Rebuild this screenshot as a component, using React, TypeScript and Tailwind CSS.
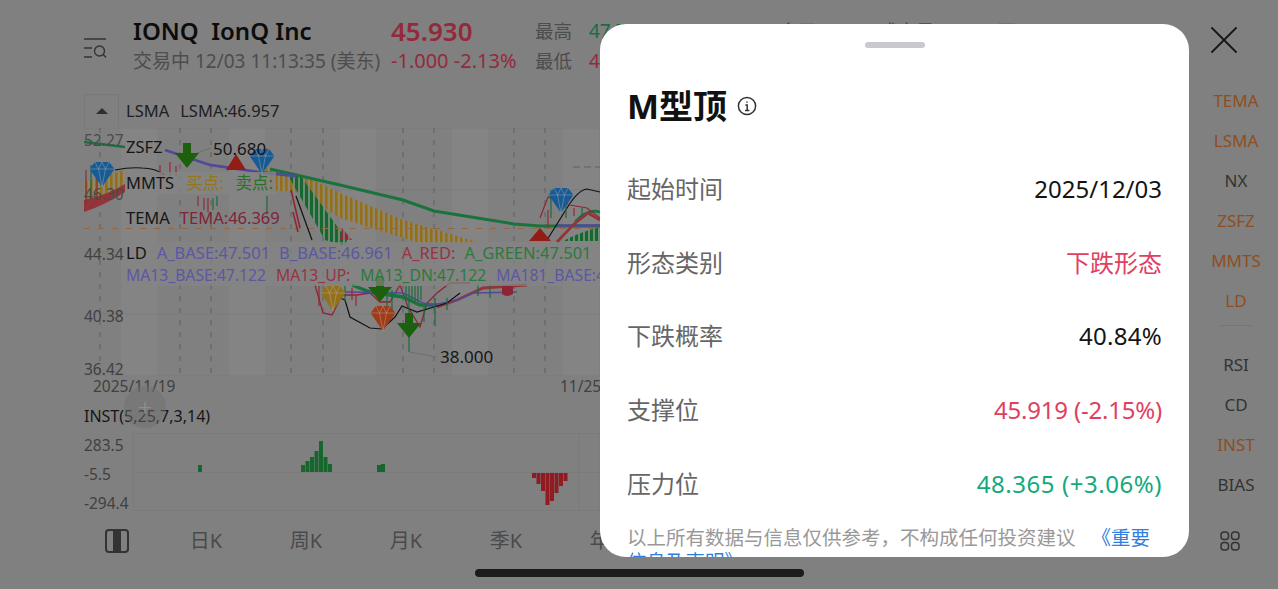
import React from "react";
import { X } from "lucide-react";

const railTop = [
  { label: "TEMA", on: true },
  { label: "LSMA", on: true },
  { label: "NX", on: false },
  { label: "ZSFZ", on: true },
  { label: "MMTS", on: true },
  { label: "LD", on: true },
];
const railBottom = [
  { label: "RSI", on: false },
  { label: "CD", on: false },
  { label: "INST", on: true },
  { label: "BIAS", on: false },
];

const rows = [
  { label: "起始时间", value: "2025/12/03", color: "text-[#141414]" },
  { label: "形态类别", value: "下跌形态", color: "text-[#e0405f]" },
  { label: "下跌概率", value: "40.84%", color: "text-[#141414] tracking-[0.3px]" },
  { label: "支撑位", value: "45.919 (-2.15%)", color: "text-[#e0405f] tracking-[-0.2px]" },
  { label: "压力位", value: "48.365 (+3.06%)", color: "text-[#12a97c] tracking-[0.55px]" },
];

const stripes = [121, 229, 340, 452, 563];
const dashes = [100, 180, 211, 291, 323, 403, 434, 514, 545];

const greenBars = [
  [198, 7],
  [301, 7],
  [305.5, 11],
  [310, 15],
  [314.5, 21],
  [319, 31],
  [323.5, 15],
  [328, 8],
  [377, 7],
  [381, 8],
];
const redBars = [
  [532, 5],
  [536.5, 11],
  [541, 18],
  [545.5, 32],
  [550, 28],
  [554.5, 20],
  [559, 13],
  [563.5, 8],
];

// little candle wicks scattered around the chart: x, y1, y2, colour
const wicks: [number, number, number, string][] = [
  [86, 170, 205, "#8f2a35"],
  [91, 165, 200, "#1d6b3c"],
  [97, 175, 200, "#8f2a35"],
  [160, 165, 176, "#8f2a35"],
  [170, 162, 176, "#8f2a35"],
  [176, 166, 176, "#8f2a35"],
  [208, 198, 212, "#8f2a35"],
  [198, 196, 206, "#8f2a35"],
  [204, 198, 210, "#8f2a35"],
  [213, 198, 210, "#1d6b3c"],
  [217, 196, 206, "#1d6b3c"],
  [267, 196, 214, "#1d6b3c"],
  [319, 286, 306, "#8f2a35"],
  [345, 286, 302, "#1d6b3c"],
  [352, 288, 300, "#8f2a35"],
  [356, 296, 306, "#8f2a35"],
  [387, 296, 316, "#1d6b3c"],
  [392, 290, 310, "#1d6b3c"],
  [406, 286, 300, "#1d6b3c"],
  [409, 286, 352, "#1d6b3c"],
  [412, 286, 302, "#1d6b3c"],
  [415, 286, 302, "#1d6b3c"],
  [418, 286, 302, "#1d6b3c"],
  [421, 286, 300, "#1d6b3c"],
  [424, 306, 322, "#1d6b3c"],
  [435, 298, 326, "#1d6b3c"],
  [447, 298, 310, "#1d6b3c"],
  [478, 284, 296, "#1d6b3c"],
  [490, 284, 298, "#1d6b3c"],
  [551, 190, 218, "#1d6b3c"],
  [548, 210, 228, "#8f2a35"],
  [566, 205, 218, "#1d6b3c"],
  [574, 208, 216, "#8f2a35"],
  [582, 208, 216, "#1d6b3c"],
];

const Diamond = ({ x, y, fill }: { x: number; y: number; fill: string }) => (
  <g transform={`translate(${x} ${y})`}>
    <path d="M-12.5 -5 L-7 -12 L7 -12 L12.5 -5 L0 13 Z" fill={fill} />
    <path
      d="M-12.5 -5 H12.5 M-7 -12 L-3.5 -5 L0 -12 L3.5 -5 L7 -12 M-3.5 -5 L0 13 L3.5 -5"
      fill="none"
      stroke="#b5b5b5"
      strokeWidth="0.7"
      opacity="0.6"
    />
  </g>
);

const DownArrow = ({ x, y }: { x: number; y: number }) => (
  <path
    d={`M${x - 4} ${y - 15} h8 v10 h8 L${x} ${y + 10} L${x - 12} ${y - 5} h8 Z`}
    fill="#1c600e"
  />
);

const PriceChart = () => (
  <svg viewBox="84 128 516 248" className="block h-full w-full">
    <defs>
      <pattern id="gold" width="5" height="6" patternUnits="userSpaceOnUse">
        <rect width="5" height="6" fill="#8c8672" />
        <rect width="2.6" height="6" fill="#946f16" />
      </pattern>
      <pattern id="greenHatch" width="5" height="6" patternUnits="userSpaceOnUse">
        <rect width="5" height="6" fill="#6d8a72" />
        <rect width="3" height="6" fill="#176830" />
      </pattern>
      <pattern id="redHatch" width="5" height="6" patternUnits="userSpaceOnUse">
        <rect width="5" height="6" fill="#8f6a6d" />
        <rect width="3" height="6" fill="#8e2c36" />
      </pattern>
    </defs>

    {stripes.map((x) => (
      <rect key={x} x={x} y="128" width="36" height="248" fill="#848484" />
    ))}
    {[128, 190, 252, 314, 376].map((y) => (
      <line key={y} x1="84" x2="600" y1={y} y2={y} stroke="#7a7a7a" strokeWidth="0.7" />
    ))}
    {dashes.map((x) => (
      <line
        key={x}
        x1={x}
        x2={x}
        y1="128"
        y2="376"
        stroke="#5e5e5e"
        strokeWidth="1"
        strokeDasharray="5 7"
      />
    ))}

    {/* ribbons */}
    <path d="M84 182 L125 170 L125 188 L84 206 Z" fill="url(#gold)" />
    <path d="M84 200 Q110 194 125 184 L125 192 Q105 205 84 212 Z" fill="#933438" />
    <path d="M266 168 L300 174 L340 193 L403 220 L430 228 L480 243 L420 243 L403 238 L340 218 L300 192 L266 190 Z" fill="url(#gold)" />
    <path d="M286 172 L300 175 L347 240 L345 246 L325 240 Z" fill="url(#greenHatch)" />
    <path d="M342 228 L352 240 L340 240 Z" fill="url(#redHatch)" />
    <path d="M563 241 Q580 232 600 227 L600 241 Z" fill="url(#greenHatch)" />

    {/* dashed level lines */}
    <line x1="84" x2="600" y1="228.5" y2="228.5" stroke="#96653e" strokeWidth="1.2" strokeDasharray="6 8" />
    <line x1="573" x2="600" y1="167" y2="167" stroke="#5e5e5e" strokeWidth="1" strokeDasharray="7 4" />

    {/* moving averages */}
    <path d="M84 142 L125 147" fill="none" stroke="#1c7040" strokeWidth="2.6" />
    <path d="M270 169 L340 185 L403 200 L434 211 L514 224 L540 226 L600 226" fill="none" stroke="#1a723c" strokeWidth="3" />
    <path d="M165 150 L210 165 L258 172 L296 176" fill="none" stroke="#524a98" strokeWidth="2.8" />
    <path d="M557 225.5 H600" fill="none" stroke="#524a98" strokeWidth="2.6" />
    <path d="M575 222 Q588 208 600 212" fill="none" stroke="#1a723c" strokeWidth="2.6" />
    <path d="M557 242 L573 225 L588 213 L600 220" fill="none" stroke="#933438" strokeWidth="2.8" />
    <path d="M115 170 Q130 167 142 168 Q155 168 165 175" fill="none" stroke="#111" strokeWidth="1.2" />
    <path d="M296 196 L312 240" fill="none" stroke="#111" strokeWidth="1.2" />
    <path d="M547 240 L567 208 Q578 190 587 189 L600 192" fill="none" stroke="#111" strokeWidth="1.2" />

    {/* red price line */}
    <path d="M291 190 L300 228 M293 212 L298 232" fill="none" stroke="#8e2535" strokeWidth="1.6" />
    <path d="M540 218 L548 197 L570 205 L587 208 L600 218" fill="none" stroke="#8e2535" strokeWidth="1.2" />
    <path d="M315 285 L323 313 L332 315 L342 295 H357 L370 293 L380 302 H390 L400 285 L408 307 L420 327 L427 303 L437 293 L450 283 H470" fill="none" stroke="#8e2535" strokeWidth="1.3" />
    <path d="M437 307 L457 300 L483 288 L527 285" fill="none" stroke="#933438" strokeWidth="2.8" />
    <path d="M352 285 L370 292 L403 297 L420 305 H437" fill="none" stroke="#1a723c" strokeWidth="3.4" />
    <path d="M345 292 L403 293 L423 303 L433 305 L457 300 L473 293 L517 292" fill="none" stroke="#524a98" strokeWidth="1.5" />
    <path d="M340 298 L345 300 L350 317 L370 328 L382 329 L395 317 L402 306 L417 312 L447 303 L460 293" fill="none" stroke="#111" strokeWidth="1.2" />

    {wicks.map(([x, y1, y2, c], i) => (
      <line key={i} x1={x} x2={x} y1={y1} y2={y2} stroke={c} strokeWidth="1.2" />
    ))}

    {/* pointer lines */}
    <path d="M194 154 L211 148" fill="none" stroke="#6f6f6f" strokeWidth="1" />
    <path d="M410 352 L437 357" fill="none" stroke="#6f6f6f" strokeWidth="1" />

    {/* signal marks */}
    <DownArrow x={187} y={158} />
    <DownArrow x={380} y={292} />
    <DownArrow x={409} y={328} />
    <path d="M226 170 L236 154 L246 170 Z" fill="#931c14" />
    <path d="M529 241 L540 228 L551 241 Z" fill="#931c14" />
    <path d="M502 286 H513 V294 Q507 298 502 294 Z" fill="#8e2535" />
    <Diamond x={102} y={174} fill="#175a94" />
    <Diamond x={262} y={161} fill="#175a94" />
    <Diamond x={561} y={200} fill="#175a94" />
    <Diamond x={333} y={298} fill="#94701a" />
    <Diamond x={383} y={318} fill="#a03b17" />
  </svg>
);

const Chart = () => (
  <div className="relative h-[248px] w-[516px] text-[16.5px] leading-[22px]">
    <PriceChart />

    <span className="absolute left-0 top-[1px] text-[15.5px] text-[#4a4a4a]">52.27</span>
    <span className="absolute left-0 top-[55px] text-[15.5px] text-[#4a4a4a]">46.30</span>
    <span className="absolute left-0 top-[115px] text-[15.5px] text-[#404040]">44.34</span>
    <span className="absolute left-0 top-[177px] text-[15.5px] text-[#404040]">40.38</span>
    <span className="absolute left-0 top-[230px] text-[15.5px] text-[#404040]">36.42</span>
    <span className="absolute left-[129px] top-[10px] text-[17px] text-[#161616]">50.680</span>
    <span className="absolute left-[356px] top-[218px] text-[17px] text-[#161616]">38.000</span>

    <div className="absolute left-[42px] top-[8px] text-[#161616]">ZSFZ</div>
    <div className="absolute left-[42px] top-[44px] flex w-[150px] gap-[12px] whitespace-nowrap bg-[#858585]/80 text-[#161616]">
      <span>MMTS</span>
      <span className="text-[#94761a]">买点:</span>
      <span className="text-[#2a7028]">卖点:</span>
    </div>
    <div className="absolute left-[42px] top-[79px] flex gap-[10px]">
      <span className="text-[#161616]">TEMA</span>
      <span className="text-[#7e2438]">TEMA:46.369</span>
    </div>
    <div className="absolute left-[42px] top-[114px] flex w-[474px] gap-[9px] whitespace-nowrap bg-[#858585]/70">
      <span className="mr-[1px] text-[#161616]">LD</span>
      <span className="text-[#5b57a3]">A_BASE:47.501</span>
      <span className="text-[#5b57a3]">B_BASE:46.961</span>
      <span className="text-[#983344]">A_RED:</span>
      <span className="text-[#2b7a3c]">A_GREEN:47.501</span>
    </div>
    <div className="absolute left-[42px] top-[136px] flex w-[474px] gap-[10px] overflow-hidden whitespace-nowrap bg-[#858585]/70 text-[15.7px]">
      <span className="text-[#5b57a3]">MA13_BASE:47.122</span>
      <span className="text-[#983344]">MA13_UP:</span>
      <span className="text-[#2b7a3c]">MA13_DN:47.122</span>
      <span className="text-[#5b57a3]">MA181_BASE:47.122</span>
    </div>
  </div>
);

const IndicatorChart = () => (
  <div className="relative h-[78px] w-[516px]">
    <svg viewBox="84 433 516 78" className="block h-full w-full">
      <rect x="133" y="433.5" width="467" height="77" fill="none" stroke="#7a7a7a" strokeWidth="0.7" />
      <line x1="133" x2="600" y1="472.5" y2="472.5" stroke="#787878" strokeWidth="0.7" />
      <line x1="579" x2="579" y1="433" y2="511" stroke="#7a7a7a" strokeWidth="0.7" />
      {greenBars.map(([x, h]) => (
        <rect key={x} x={x} y={472 - h} width="4" height={h} fill="#17662e" />
      ))}
      {redBars.map(([x, h]) => (
        <rect key={x} x={x} y="473" width="4" height={h} fill="#8e1c22" />
      ))}
    </svg>
    <span className="absolute left-0 top-[1px] text-[15.5px] leading-[22px] text-[#404040]">283.5</span>
    <span className="absolute left-0 top-[30px] text-[15.5px] leading-[22px] text-[#404040]">-5.5</span>
    <span className="absolute left-0 top-[59px] text-[15.5px] leading-[22px] text-[#404040]">-294.4</span>
  </div>
);

const App = () => {
  return (
    <div className="relative flex h-[589px] w-[1278px] overflow-hidden bg-[#808080] font-['Noto_Sans','Noto_Sans_CJK_SC',sans-serif]">
      <main className="flex h-full w-[1190px] flex-col pl-[84px]">
        <header className="flex h-[92px] shrink-0 pt-[16px] whitespace-nowrap">
          <svg viewBox="0 0 24 22" className="mt-[21px] h-[22px] w-[24px] shrink-0" fill="none" stroke="#333" strokeWidth="1.4">
            <path d="M0 2 H22 M0 11 H8 M0 20 H8" />
            <circle cx="15.5" cy="14" r="5" />
            <path d="M19.2 17.6 L22 20.4" />
          </svg>
          <div className="ml-[25px] w-[258px]">
            <div className="h-[30px] text-[24px] font-semibold leading-[30px] text-[#0c0c0c]">
              IONQ&nbsp; IonQ Inc
            </div>
            <div className="text-[19px] leading-[30px] text-[#4d4d4d]">交易中 12/03 11:13:35 (美东)</div>
          </div>
          <div className="w-[144px]">
            <div className="h-[30px] text-[26px] font-semibold leading-[30px] text-[#932a3c]">45.930</div>
            <div className="text-[20px] leading-[30px] text-[#932a3c]">-1.000 -2.13%</div>
          </div>
          <div className="w-[54px] text-[18.5px] leading-[30px] text-[#4d4d4d]">
            <div>最高</div>
            <div>最低</div>
          </div>
          <div className="w-[190px] text-[19px] leading-[30px]">
            <div className="text-[#1c6b45]">47.780</div>
            <div className="text-[#932a3c]">45.620</div>
          </div>
          <div className="w-[100px] text-[18.5px] leading-[30px] text-[#4d4d4d]">今开</div>
          <div className="text-[18.5px] leading-[30px] text-[#4d4d4d]">成交量 1234.5万</div>
        </header>

        <div className="flex h-[36px] shrink-0 items-center">
          <div className="flex h-[33px] w-[35px] items-center justify-center rounded-t-[3px] border border-b-0 border-[#787878]">
            <div className="h-0 w-0 border-x-[6px] border-b-[6px] border-x-transparent border-b-[#2e2e2e]" />
          </div>
          <div className="ml-[7px] flex gap-[11px] pt-[2px] text-[16.5px] text-[#202020]">
            <span>LSMA</span>
            <span>LSMA:46.957</span>
          </div>
        </div>

        <Chart />

        <div className="relative h-[22px] w-[516px] shrink-0 text-[15.5px] leading-[20px] text-[#404040]">
          <span className="absolute left-[9px] top-0">2025/11/19</span>
          <span className="absolute left-[476px] top-0">11/25</span>
        </div>

        <div className="h-[35px] shrink-0 pt-[6px] text-[16px] leading-[24px] text-[#161616]">INST(5,25,7,3,14)</div>

        <IndicatorChart />

        <nav className="flex h-[60px] shrink-0 items-center text-[20px] text-[#4a4a4a]">
          <svg viewBox="0 0 24 24" className="ml-[21px] h-[24px] w-[24px]">
            <rect x="1" y="1" width="22" height="22" rx="3" fill="none" stroke="#333" strokeWidth="2" />
            <rect x="8" y="1" width="8" height="22" fill="#333" />
          </svg>
          <div className="ml-[27px] flex">
            <span className="w-[100px] text-center">日K</span>
            <span className="w-[100px] text-center">周K</span>
            <span className="w-[100px] text-center">月K</span>
            <span className="w-[100px] text-center">季K</span>
            <span className="w-[100px] text-center">年K</span>
          </div>
        </nav>
      </main>

      <aside className="flex w-[88px] flex-col items-center pl-[4px] text-[17px]">
        <div className="flex h-[81px] w-full shrink-0 items-start justify-center pr-[24px] pt-[16px]">
          <X className="h-[48px] w-[48px] shrink-0 text-[#161616]" strokeWidth={0.9} />
        </div>
        {railTop.map((item) => (
          <div key={item.label} className={`flex h-[40px] shrink-0 items-center ${item.on ? "text-[#8e4e22]" : "text-[#333333]"}`}>
            {item.label}
          </div>
        ))}
        <div className="my-[4px] h-px w-[34px] shrink-0 bg-[#767676]" />
        <div className="h-[15px] shrink-0" />
        {railBottom.map((item) => (
          <div key={item.label} className={`flex h-[40px] shrink-0 items-center ${item.on ? "text-[#8e4e22]" : "text-[#333333]"}`}>
            {item.label}
          </div>
        ))}
        <svg viewBox="0 0 20 20" className="mr-[12px] mt-[26px] h-[20px] w-[20px]" fill="none" stroke="#333" strokeWidth="1.5">
          <rect x="1" y="1" width="7.5" height="7.5" rx="3" />
          <rect x="11.5" y="1" width="7.5" height="7.5" rx="3" />
          <rect x="1" y="11.5" width="7.5" height="7.5" rx="3" />
          <rect x="11.5" y="11.5" width="7.5" height="7.5" rx="3" />
        </svg>
      </aside>

      {/* drag button sitting over the chart */}
      <div className="absolute left-[124px] top-[386px] flex h-[42px] w-[42px] items-center justify-center rounded-full bg-[#707070]/50 text-[26px] font-light leading-none text-[#8e8e8e]">
        +
      </div>

      {/* bottom sheet */}
      <section className="absolute left-[600px] top-[24px] h-[533px] w-[589px] overflow-hidden rounded-[26px] bg-white px-[27px]">
        <div className="mx-auto mt-[18px] h-[6px] w-[60px] rounded-full bg-[#c9cacd]" />
        <div className="mt-[36px] flex h-[44px] items-center">
          <h1 className="text-[34px] font-bold leading-[44px] text-[#111111]">M型顶</h1>
          <svg viewBox="0 0 20 20" className="ml-[10px] h-[20px] w-[20px]" fill="none" stroke="#333" strokeWidth="1.5">
            <circle cx="10" cy="10" r="8.6" />
            <path d="M10 5.4 V6.8 M8.4 9 H10.2 V14.2 M8 14.4 H12.4" />
          </svg>
        </div>
        <div className="mt-[24px] flex flex-col">
          {rows.map((row) => (
            <div key={row.label} className="flex h-[73.75px] items-center justify-between text-[24px]">
              <span className="text-[#666666]">{row.label}</span>
              <span className={row.color}>{row.value}</span>
            </div>
          ))}
        </div>
        <p className="mt-[5px] text-[19.5px] leading-[24px] text-[#999999]">
          以上所有数据与信息仅供参考，不构成任何投资建议
          <span className="ml-[16px] text-[#2f7fe0]">《重要信息及声明》</span>
        </p>
      </section>

      {/* home indicator */}
      <div className="absolute left-[475px] top-[569px] h-[8px] w-[329px] rounded-full bg-[#1c1c1c]" />
    </div>
  );
};

export default App;
